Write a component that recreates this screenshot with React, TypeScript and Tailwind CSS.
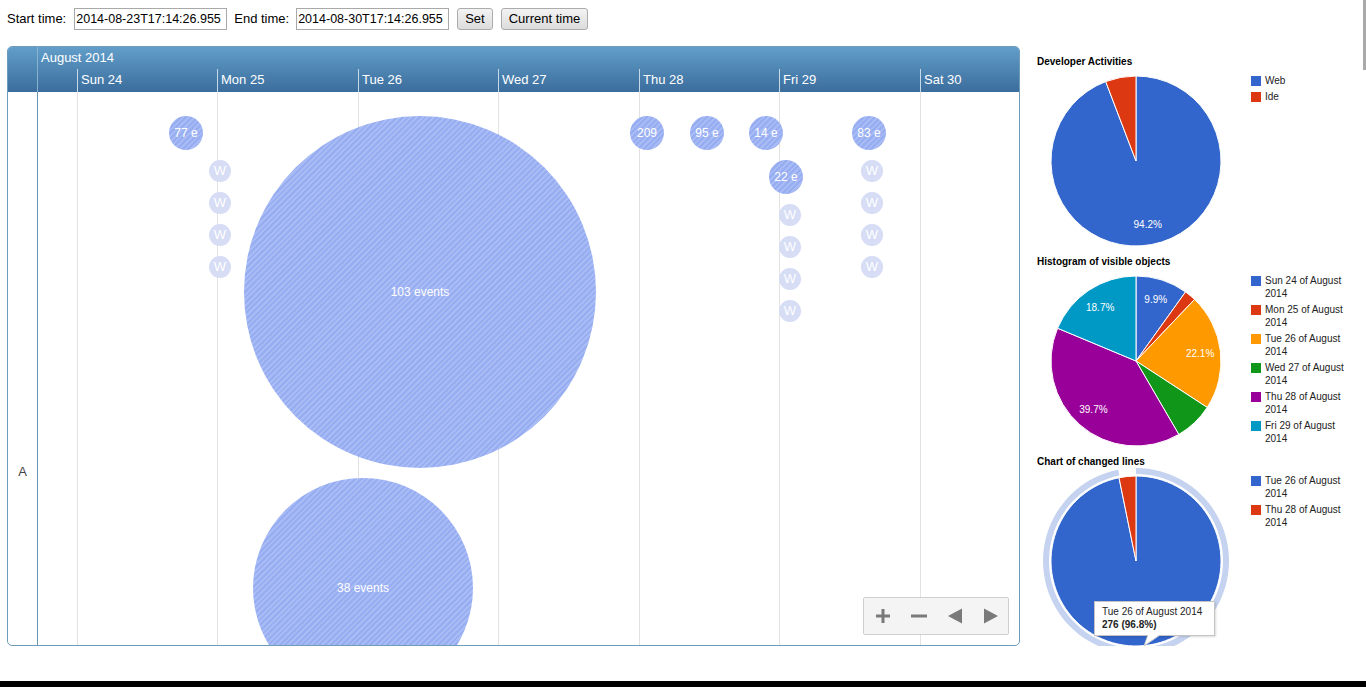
import React from "react";

type Slice = { label: string; value: number; color: string };

const FONT = "Liberation Sans, Arial, sans-serif";

const days = [
  { label: "", w: "w-[39px]" },
  { label: "Sun 24", w: "w-[140px]" },
  { label: "Mon 25", w: "w-[141px]" },
  { label: "Tue 26", w: "w-[140px]" },
  { label: "Wed 27", w: "w-[141px]" },
  { label: "Thu 28", w: "w-[140px]" },
  { label: "Fri 29", w: "w-[141px]" },
  { label: "Sat 30", w: "flex-1" },
];

const bubbles = [
  { x: 131, y: 24, d: 34, label: "77 e" },
  { x: 206, y: 24, d: 352, label: "103 events" },
  { x: 215, y: 386, d: 220, label: "38 events" },
  { x: 592, y: 24, d: 34, label: "209" },
  { x: 652, y: 24, d: 34, label: "95 e" },
  { x: 711, y: 24, d: 34, label: "14 e" },
  { x: 731, y: 68, d: 34, label: "22 e" },
  { x: 814, y: 24, d: 34, label: "83 e" },
];

const webMarks = [
  { x: 171, y: 68 },
  { x: 171, y: 100 },
  { x: 171, y: 132 },
  { x: 171, y: 164 },
  { x: 741, y: 112 },
  { x: 741, y: 144 },
  { x: 741, y: 176 },
  { x: 741, y: 208 },
  { x: 823, y: 68 },
  { x: 823, y: 100 },
  { x: 823, y: 132 },
  { x: 823, y: 164 },
];

const activities: Slice[] = [
  { label: "Web", value: 94.2, color: "#3366cc" },
  { label: "Ide", value: 5.8, color: "#dc3912" },
];

const histogram: Slice[] = [
  { label: "Sun 24 of August 2014", value: 9.9, color: "#3366cc" },
  { label: "Mon 25 of August 2014", value: 2.2, color: "#dc3912" },
  { label: "Tue 26 of August 2014", value: 22.1, color: "#ff9900" },
  { label: "Wed 27 of August 2014", value: 7.4, color: "#109618" },
  { label: "Thu 28 of August 2014", value: 39.7, color: "#990099" },
  { label: "Fri 29 of August 2014", value: 18.7, color: "#0099c6" },
];

const changedLines: Slice[] = [
  { label: "Tue 26 of August 2014", value: 96.8, color: "#3366cc" },
  { label: "Thu 28 of August 2014", value: 3.2, color: "#dc3912" },
];

function pt(cx: number, cy: number, r: number, a: number) {
  const rad = (a * Math.PI) / 180;
  return [cx + r * Math.sin(rad), cy - r * Math.cos(rad)];
}

function slicePath(cx: number, cy: number, r: number, a0: number, a1: number) {
  const [x0, y0] = pt(cx, cy, r, a0);
  const [x1, y1] = pt(cx, cy, r, a1);
  const large = a1 - a0 > 180 ? 1 : 0;
  return `M ${cx} ${cy} L ${x0} ${y0} A ${r} ${r} 0 ${large} 1 ${x1} ${y1} Z`;
}

function ringPath(cx: number, cy: number, r0: number, r1: number, a0: number, a1: number) {
  const [ox0, oy0] = pt(cx, cy, r1, a0);
  const [ox1, oy1] = pt(cx, cy, r1, a1);
  const [ix0, iy0] = pt(cx, cy, r0, a0);
  const [ix1, iy1] = pt(cx, cy, r0, a1);
  const large = a1 - a0 > 180 ? 1 : 0;
  return `M ${ox0} ${oy0} A ${r1} ${r1} 0 ${large} 1 ${ox1} ${oy1} L ${ix1} ${iy1} A ${r0} ${r0} 0 ${large} 0 ${ix0} ${iy0} Z`;
}

function Pie({ data, ring }: { data: Slice[]; ring?: boolean }) {
  const c = 93;
  const r = 85;
  let acc = 0;
  const parts = data.map((s) => {
    const a0 = (acc / 100) * 360;
    acc += s.value;
    const a1 = (acc / 100) * 360;
    return { ...s, a0, a1 };
  });
  return (
    <svg width="186" height="186" viewBox="0 0 186 186" className="shrink-0">
      {ring && <path d={ringPath(c, c, 87, 93, parts[0].a0, parts[0].a1 + 0.5)} fill="#c5d3f0" />}
      {parts.map((p) => (
        <path key={p.label} d={slicePath(c, c, r, p.a0, p.a1)} fill={p.color} stroke="#fff" strokeWidth="1" />
      ))}
      {/* the hovered chart has its slice label hidden under the tooltip */}
      {!ring &&
        parts
          .filter((p) => p.value >= 9)
          .map((p) => {
            const [x, y] = pt(c, c, r * 0.76, (p.a0 + p.a1) / 2);
            return (
              <text
                key={p.label + "t"}
                x={x}
                y={y + 3.5}
                textAnchor="middle"
                fontSize="10"
                fontFamily={FONT}
                fill="#fff"
              >
                {p.value.toFixed(1)}%
              </text>
            );
          })}
    </svg>
  );
}

function Legend({ data }: { data: Slice[] }) {
  return (
    <ul className="mt-[6px] ml-[22px] flex flex-col gap-[3px]">
      {data.map((s) => (
        <li key={s.label} className="flex items-start gap-[4px]">
          <span className="mt-[2px] h-[10px] w-[10px] shrink-0" style={{ backgroundColor: s.color }} />
          <span className="w-[88px] text-[10px] leading-[13px] text-[#222]">{s.label}</span>
        </li>
      ))}
    </ul>
  );
}

function ChartBlock({
  title,
  data,
  ring,
  short,
  children,
}: {
  title: string;
  data: Slice[];
  ring?: boolean;
  short?: boolean;
  children?: React.ReactNode;
}) {
  return (
    <div className={`relative w-[336px] overflow-hidden ${short ? "h-[196px]" : "h-[200px]"}`}>
      <div className="pl-[7px] pt-[6px] text-[10px] font-bold leading-[12px] text-black">{title}</div>
      <div className="flex">
        <div className="ml-[13px]">
          <Pie data={data} ring={ring} />
        </div>
        <Legend data={data} />
      </div>
      {children}
    </div>
  );
}

function Tooltip() {
  return (
    <div className="absolute left-[64px] top-[151px]">
      <div className="border border-[#c4c4c4] bg-white pt-[3px] pr-[12px] pb-[4px] pl-[7px] text-[10px] leading-[13px] text-[#222] shadow-[1px_1px_2px_rgba(0,0,0,0.15)]">
        <div className="whitespace-nowrap">Tue 26 of August 2014</div>
        <div className="font-bold">276 (96.8%)</div>
      </div>
      <svg width="20" height="12" viewBox="0 0 20 12" className="ml-[50px] -mt-[1px]">
        <path d="M4 0 L0 11 L16 0" fill="#fff" stroke="#c4c4c4" strokeWidth="1" />
        <path d="M4.5 0 L1.5 8 L15 0 Z" fill="#fff" />
      </svg>
    </div>
  );
}

function Bubble({ x, y, d, label }: { x: number; y: number; d: number; label: string }) {
  return (
    <div
      className="absolute flex items-center justify-center rounded-full bg-[repeating-linear-gradient(135deg,#97adf1_0px,#97adf1_2px,#a8bbf4_2px,#a8bbf4_4px)] text-[12px] text-white"
      style={{ left: x, top: y, width: d, height: d }}
    >
      {label}
    </div>
  );
}

function WebMark({ x, y }: { x: number; y: number }) {
  return (
    <div
      className="absolute flex h-[22px] w-[22px] items-center justify-center rounded-full bg-[#d6ddf5] text-[13px] text-white"
      style={{ left: x, top: y }}
    >
      W
    </div>
  );
}

function ZoomControls() {
  return (
    <div className="absolute right-[10px] bottom-[10px] flex h-[38px] w-[146px] items-center gap-[20px] rounded-[2px] border border-[#cfcfcf] bg-[#f4f4f4] pl-[11px]">
      <svg width="16" height="16" viewBox="0 0 16 16">
        <path d="M6.5 1h3v5.5H15v3H9.5V15h-3V9.5H1v-3h5.5z" fill="#7a7a7a" />
      </svg>
      <svg width="16" height="16" viewBox="0 0 16 16">
        <rect x="0" y="6.5" width="16" height="3" fill="#7a7a7a" />
      </svg>
      <svg width="16" height="16" viewBox="0 0 16 16">
        <path d="M1 8 L15 0.5 V15.5 Z" fill="#7a7a7a" />
      </svg>
      <svg width="16" height="16" viewBox="0 0 16 16">
        <path d="M15 8 L1 0.5 V15.5 Z" fill="#7a7a7a" />
      </svg>
    </div>
  );
}

function Timeline() {
  return (
    <div className="ml-[7px] flex h-[600px] w-[1013px] flex-col overflow-hidden rounded-[5px] border border-[#6f9cba]">
      <div className="flex h-[45px] shrink-0 bg-linear-to-b from-[#629ec9] to-[#3b6d9d] text-[13px] text-white">
        <div className="w-[30px] border-r border-[#88b2d2]" />
        <div className="flex flex-1 flex-col">
          <div className="h-[22px] pl-[3px] leading-[22px]">August 2014</div>
          <div className="flex h-[23px]">
            {days.map((d, i) => (
              <div
                key={i}
                className={`${d.w} ${i > 0 ? "border-l border-[#c6d9e9]" : ""} pl-[3px] leading-[22px]`}
              >
                {d.label}
              </div>
            ))}
          </div>
        </div>
      </div>
      <div className="flex flex-1">
        <div className="w-[30px] border-r border-[#6b97b5] pt-[370px] text-center text-[13px] text-[#444]">A</div>
        <div className="relative flex flex-1 overflow-hidden">
          {days.map((d, i) => (
            <div key={i} className={`${d.w} ${i > 0 ? "border-l border-[#e2e2e2]" : ""}`} />
          ))}
          {webMarks.map((m, i) => (
            <WebMark key={i} {...m} />
          ))}
          {bubbles.map((b, i) => (
            <Bubble key={i} {...b} />
          ))}
          <ZoomControls />
        </div>
      </div>
    </div>
  );
}

export default function App() {
  return (
    <div className="relative h-[687px] w-[1366px] overflow-hidden bg-white font-['Liberation_Sans',Arial,sans-serif] text-black">
      <div className="flex h-[681px] flex-col">
        <div className="flex items-center pt-[8px] pl-[7px] text-[13px]">
          <span>Start time:</span>
          <input
            readOnly
            value="2014-08-23T17:14:26.955"
            className="ml-[8px] h-[22px] w-[153px] border border-[#a9a9a9] px-[1px] text-[12.5px] outline-none"
          />
          <span className="ml-[7px]">End time:</span>
          <input
            readOnly
            value="2014-08-30T17:14:26.955"
            className="ml-[7px] h-[22px] w-[153px] border border-[#a9a9a9] px-[1px] text-[12.5px] outline-none"
          />
          <button className="ml-[8px] h-[22px] rounded-[3px] border border-[#acacac] bg-linear-to-b from-[#f3f3f3] to-[#dcdcdc] px-[7px] text-[13px]">
            Set
          </button>
          <button className="ml-[8px] h-[22px] rounded-[3px] border border-[#acacac] bg-linear-to-b from-[#f3f3f3] to-[#dcdcdc] px-[7px] text-[13px]">
            Current time
          </button>
        </div>
        <div className="mt-[16px] flex">
          <Timeline />
          <div className="ml-[10px] flex flex-col pt-[4px]">
            <ChartBlock title="Developer Activities" data={activities} />
            <ChartBlock title="Histogram of visible objects" data={histogram} />
            <ChartBlock title="Chart of changed lines" data={changedLines} ring short>
              <Tooltip />
            </ChartBlock>
          </div>
        </div>
      </div>
      <div className="h-[6px] bg-black" />
      <div className="absolute top-0 right-0 h-[70px] w-[3px] bg-[#a9a9a9]" />
    </div>
  );
}
